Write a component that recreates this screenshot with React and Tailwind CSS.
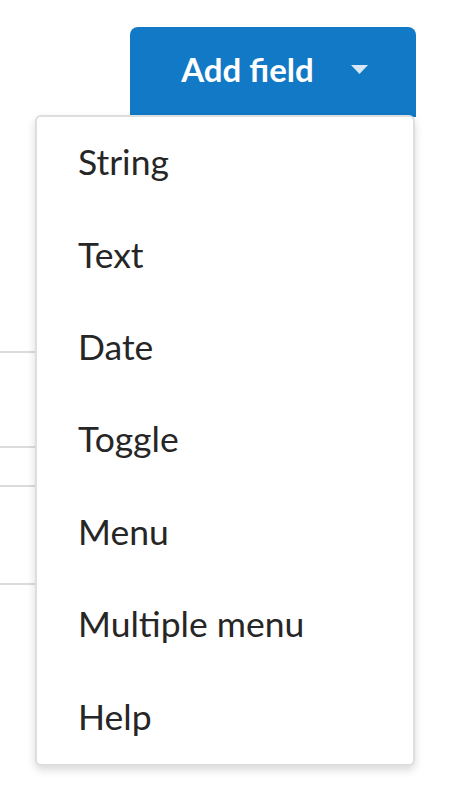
export default function App() {
  const items = ["String", "Text", "Date", "Toggle", "Menu", "Multiple menu", "Help"];
  const rows = ["h-[236px]", "h-[95px]", "h-[39px]", "h-[98px]"];
  return (
    <div className="relative w-[451px] h-[810px] bg-white overflow-hidden" style={{ fontFamily: "Lato, 'Noto Sans', sans-serif" }}>
      <div className="flex flex-col pt-[27px]">
        <div className="flex justify-end pr-[35px]">
          <button className="w-[286px] h-[90px] rounded-t-[8px] bg-[#1279c6] text-white flex items-start justify-center pt-[22px] gap-[37px] pl-[3px]">
            <span className="text-[33px] font-bold leading-[40px]">Add field</span>
            <svg width="17" height="10" viewBox="0 0 17 10" className="mt-[16px]">
              <path d="M0 0 L17 0 L8.5 9 Z" fill="#d6e6f5" />
            </svg>
          </button>
        </div>
        <div className="flex flex-col w-[40px]">
          {rows.map((h, i) => (
            <div key={i} className={`${h} border-b-2 border-[#dcdcdc]`} />
          ))}
        </div>
      </div>
      <div className="absolute left-[35px] top-[115px] w-[380px] h-[651px] bg-white rounded-[6px] border-2 border-[#dedede] shadow-[0_4px_8px_rgba(0,0,0,0.15)] flex flex-col">
        {items.map((t) => (
          <div key={t} className="h-[93px] flex items-center pl-[41px] pb-[3px] text-[35.5px] text-[#262626]">
            {t}
          </div>
        ))}
      </div>
    </div>
  );
}
